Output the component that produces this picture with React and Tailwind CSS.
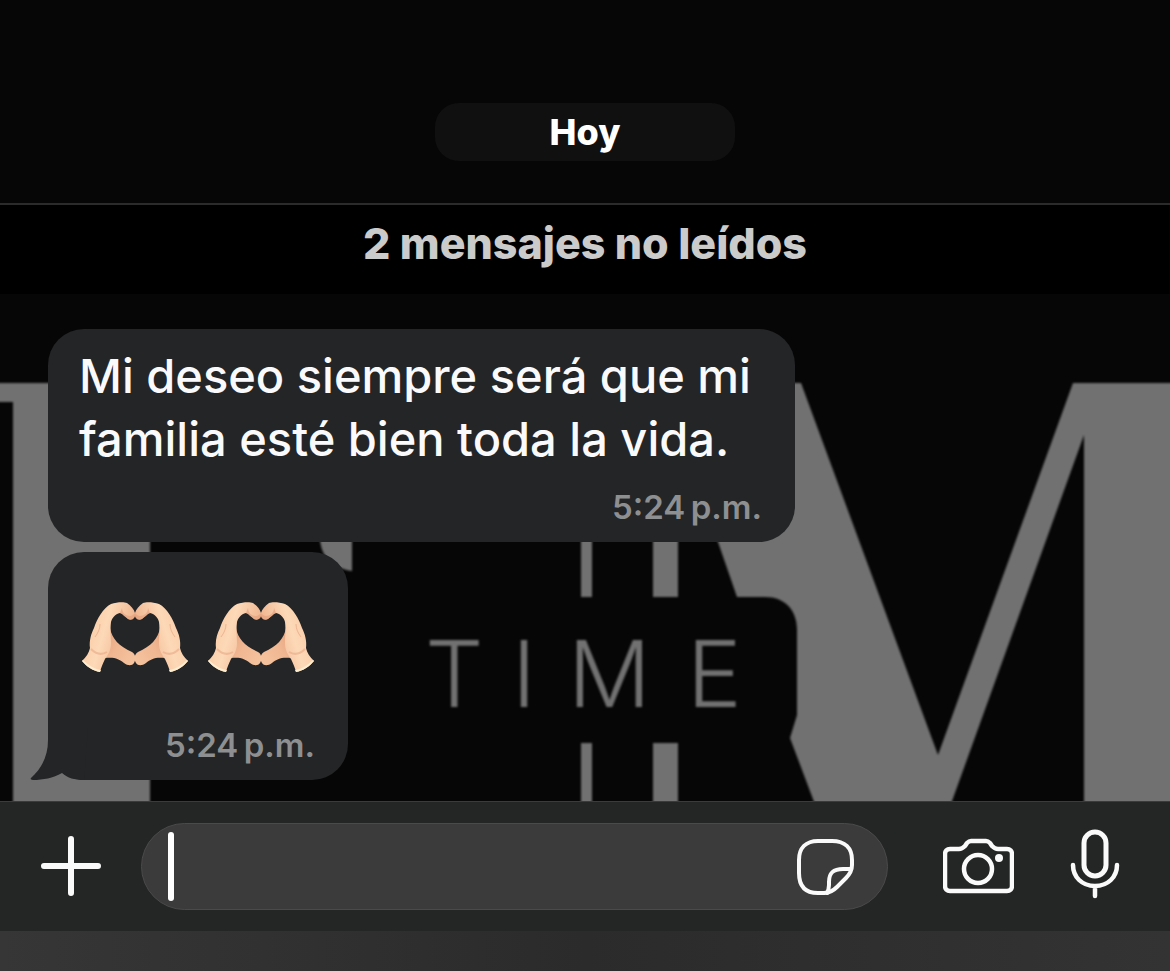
import React, { useState } from 'react';

const MESSAGES = [
  { id: 1, text: 'Mi deseo siempre será que mi familia esté bien toda la vida.', time: '5:24\u202fp.m.' },
  { id: 2, hearts: 2, time: '5:24\u202fp.m.', last: true },
];

const Wallpaper = () => (
  <svg
    className="absolute inset-x-0 bottom-0 h-[431px] w-full"
    viewBox="0 370 1170 431"
    preserveAspectRatio="xMidYMax slice"
    aria-hidden="true"
  >
    <defs>
      <filter id="soft" x="-5%" y="-5%" width="110%" height="110%">
        <feGaussianBlur stdDeviation="1" />
      </filter>
    </defs>
    <g fill="#717171" filter="url(#soft)">
      <path d="M-10 383H352V571C335 568 322 560 320 540V402H150V815H13V402H-10Z" />
      <path d="M581 500H592V597H581ZM653 500H678V597H653ZM581 743H592V815H581ZM653 743H678V815H653Z" />
      <path d="M655 383H801L938 755L1073 383H1185V815H1084V435L947 815H819L790 738L797 715V630C797 610 785 597 765 597H737L718 542Z" />
      <text
        x="425 512 568 687"
        y="707"
        fontFamily="Inter, sans-serif"
        fontSize="92"
        fontWeight="300"
      >
        TIME
      </text>
    </g>
  </svg>
);

const HeartHands = () => (
  <svg className="h-[71px] w-[108px]" viewBox="0 0 108 71" role="img" aria-label="Manos en forma de corazón">
    <defs>
      <linearGradient id="palm" x1="0" y1="0" x2="1" y2="0.4">
        <stop offset="0" stopColor="#efb28a" />
        <stop offset="0.3" stopColor="#fbd0ac" />
        <stop offset="0.5" stopColor="#fdd9b8" />
        <stop offset="1" stopColor="#eeb08a" />
      </linearGradient>
      <linearGradient id="thumb" x1="0" y1="0" x2="1" y2="0.8">
        <stop offset="0" stopColor="#e5a27e" />
        <stop offset="0.5" stopColor="#f0b792" />
        <stop offset="1" stopColor="#f5c29e" />
      </linearGradient>
      <g id="hand">
        <path
          d="M29 26C31 37 38 44 51 50C55 52 55 58 53 61C51 64 47 64 43 61C38 57 34 55 24 56Z"
          fill="url(#thumb)"
        />
        <path
          d="M1 59C5 55 8 51 9 46C8 39 10 32 13 26C16 17 22 6 30 2C36 0 43 0 46 1C50 4 53 7 54 11C55 16 51 19 47 17C44 15 42 12 39 11C34 12 31 16 30 20C29 28 30 36 30 41C30 48 27 53 24 57C22 61 20 66 19 70C12 69 5 64 1 59Z"
          fill="url(#palm)"
        />
        <path d="M41 6C41 11 45 14 49 14C51 14 53 12 54 11C55 16 51 19 47 17C44 15 42 12 39 11Z" fill="#e39d79" opacity="0.6" />
        <path d="M10 47C15 52 21 53 26 50" fill="none" stroke="#e8a983" strokeWidth="2" opacity="0.6" />
        <path d="M19 22C19 27 17 31 14 35" fill="none" stroke="#e5a57f" strokeWidth="1" opacity="0.7" />
        <path d="M1 59C5 64 12 69 19 70L20 68C13 67 7 63 2 58Z" fill="#ffedcf" />
      </g>
    </defs>
    <use href="#hand" />
    <use href="#hand" transform="matrix(-1 0 0 1 108 0)" />
  </svg>
);

const BubbleTail = () => (
  <svg className="absolute -left-[18px] bottom-0 h-[50px] w-[58px]" viewBox="0 0 58 50" aria-hidden="true">
    <path
      d="M18 0V10C18 26 12 38 1 48C0 49 1 50 3 50C13 50 23 48 32 43C38 48 44 50 54 50L58 0Z"
      fill="#242527"
    />
  </svg>
);

const Bubble = ({ message }) => (
  <article className="w-fit max-w-[747px] rounded-[36px] bg-[#242527] pb-[15px]">
    {message.text && (
      <p className="px-[31px] pt-[15px] text-[47px] leading-[63px] font-[550] text-[#fafafc]">{message.text}</p>
    )}
    {message.hearts && (
      <div className="flex gap-[18px] px-[33px] pt-[50px]">
        {Array.from({ length: message.hearts }, (_, i) => (
          <HeartHands key={i} />
        ))}
      </div>
    )}
    <time
      className={`block px-[33px] text-right text-[33px] leading-[40px] font-semibold text-[#8e8f91] ${
        message.last ? 'mt-[52px]' : 'mt-[17px]'
      }`}
    >
      {message.time}
    </time>
  </article>
);

const PlusIcon = () => (
  <svg className="h-[62px] w-[62px]" viewBox="0 0 62 62" fill="none" stroke="currentColor" strokeWidth="6" strokeLinecap="round">
    <path d="M31 3V57M4 30H58" />
  </svg>
);

const StickerIcon = () => (
  <svg className="h-[58px] w-[58px]" viewBox="0 0 58 58" fill="none" stroke="currentColor" strokeWidth="4" strokeLinecap="round" strokeLinejoin="round">
    <path d="M22 3H36C49 3 56 10 56 22V27C56 32 54 36 50 40L41 49C37 53 33 55 28 55H22C9 55 3 48 3 35V22C3 10 10 3 22 3Z" />
    <path d="M55 31H47C37 31 33 35 33 44V47C33 50 32 53 31 55" />
  </svg>
);

const CameraIcon = () => (
  <svg className="h-[58px] w-[71px]" viewBox="0 0 71 58" fill="none" stroke="currentColor" strokeWidth="4.5" strokeLinejoin="round">
    <path d="M7 11H16C19 11 20 10 22 8L24 5C25 4 26 3 28 3H43C45 3 46 4 47 5L49 8C51 10 52 11 55 11H64C67 11 69 13 69 16V48C69 51 67 53 64 53H7C4 53 2 51 2 48V16C2 13 4 11 7 11Z" />
    <circle cx="35" cy="31" r="14" />
    <circle cx="56" cy="20" r="4" fill="currentColor" stroke="none" />
  </svg>
);

const MicIcon = () => (
  <svg className="h-[76px] w-[50px]" viewBox="0 0 50 76" fill="none" stroke="currentColor" strokeWidth="5" strokeLinecap="round">
    <rect x="14" y="3" width="22" height="44" rx="11" />
    <path d="M3 36C3 48 12 57 25 57C38 57 47 48 47 36M25 57V67" strokeWidth="4.5" />
  </svg>
);

const Composer = () => {
  const [draft, setDraft] = useState('');
  return (
    <form
      className="flex items-center border-t border-[#3a3b3b] bg-[#242625] py-[21px] pr-[50px] pl-10 text-[#fafafa]"
      onSubmit={(e) => e.preventDefault()}
    >
      <button type="button" aria-label="Adjuntar">
        <PlusIcon />
      </button>
      <div className="ml-[39px] flex h-[87px] min-w-0 flex-1 items-center rounded-full border border-[#4a4a4a] bg-[#3b3b3b] pr-[33px] pl-[26px]">
        <span className="h-[69px] w-[6px] shrink-0 rounded-full bg-white" />
        <input
          className="h-full min-w-0 flex-1 bg-transparent px-2 text-[42px] caret-transparent outline-none"
          type="text"
          aria-label="Mensaje"
          value={draft}
          onChange={(e) => setDraft(e.target.value)}
        />
        <button type="button" aria-label="Stickers">
          <StickerIcon />
        </button>
      </div>
      <button type="button" className="ml-[55px]" aria-label="Cámara">
        <CameraIcon />
      </button>
      <button type="button" className="ml-14" aria-label="Grabar audio">
        <MicIcon />
      </button>
    </form>
  );
};

const App = () => (
  <div className="flex min-h-screen flex-col bg-[#060606] font-['Inter',sans-serif]">
    <main className="relative flex-1 pb-5">
      <Wallpaper />
      <div className="relative">
        <div className="flex justify-center pt-[103px] pb-[42px]">
          <h2 className="w-[300px] rounded-3xl bg-[#101010] text-center text-[36px] leading-[58px] font-extrabold text-white">
            Hoy
          </h2>
        </div>
        <p className="border-t-2 border-[#2b2b2b] bg-black pt-2 pb-[21px] text-center text-[43px] leading-[60px] font-extrabold text-[#cbcbcb]">
          2 mensajes no leídos
        </p>
        <section className="flex flex-col gap-[10px] px-12 pt-[35px]">
          {MESSAGES.map((m) => (
            <div key={m.id} className="relative w-fit">
              <Bubble message={m} />
              {m.last && <BubbleTail />}
            </div>
          ))}
        </section>
      </div>
    </main>
    <Composer />
    <div className="h-10 bg-linear-to-r from-[#373636] via-[#2b2b2b] to-[#343333]" />
  </div>
);

export default App;
